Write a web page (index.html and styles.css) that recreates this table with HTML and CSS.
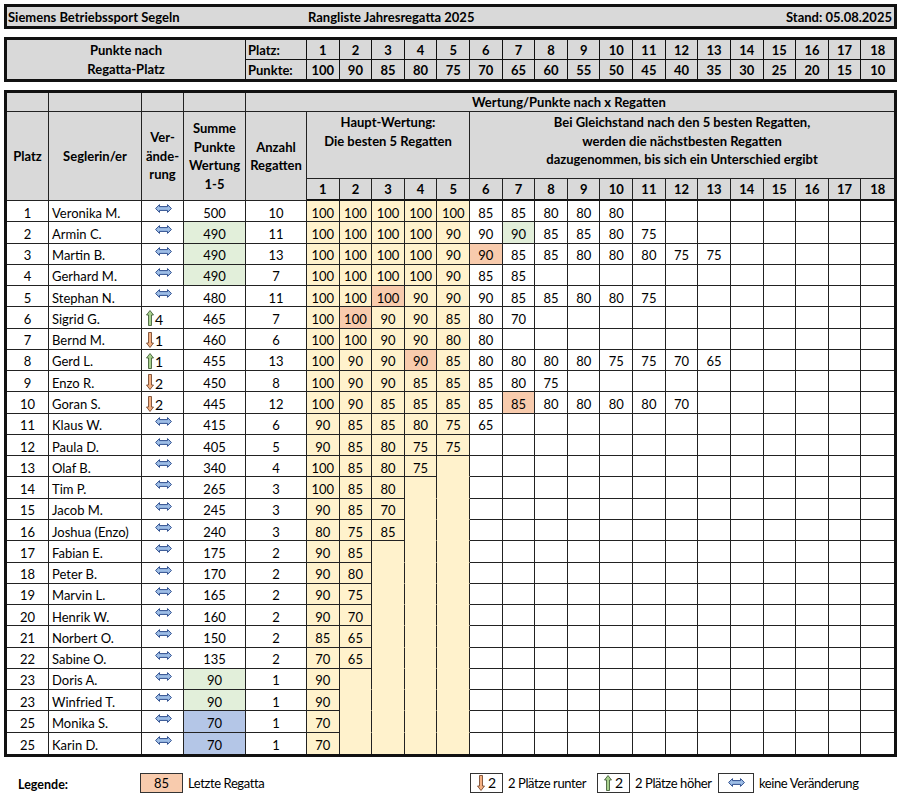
FILE: index.html
```html
<!DOCTYPE html>
<html lang="de">
<head>
<meta charset="utf-8">
<title>Rangliste Jahresregatta 2025</title>
<link rel="stylesheet" href="styles.css">
</head>
<body>
<div class="page">
  <div class="title">
    <span class="t-left">Siemens Betriebssport Segeln</span>
    <span class="t-mid">Rangliste Jahresregatta 2025</span>
    <span class="t-right">Stand: 05.08.2025</span>
  </div>

  <div class="points">
    <div class="pc p-label">Punkte nach<br>Regatta-Platz</div>
    <div class="pc p-key">Platz:</div>
    <div class="pc">1</div><div class="pc">2</div><div class="pc">3</div><div class="pc">4</div><div class="pc">5</div><div class="pc">6</div><div class="pc">7</div><div class="pc">8</div><div class="pc">9</div><div class="pc">10</div><div class="pc">11</div><div class="pc">12</div><div class="pc">13</div><div class="pc">14</div><div class="pc">15</div><div class="pc">16</div><div class="pc">17</div><div class="pc last">18</div>
    <div class="pc p-key bot">Punkte:</div>
    <div class="pc bot">100</div><div class="pc bot">90</div><div class="pc bot">85</div><div class="pc bot">80</div><div class="pc bot">75</div><div class="pc bot">70</div><div class="pc bot">65</div><div class="pc bot">60</div><div class="pc bot">55</div><div class="pc bot">50</div><div class="pc bot">45</div><div class="pc bot">40</div><div class="pc bot">35</div><div class="pc bot">30</div><div class="pc bot">25</div><div class="pc bot">20</div><div class="pc bot">15</div><div class="pc bot last">10</div>
  </div>

  <div class="main" id="main">
    <div class="c h"></div>
    <div class="c h"></div>
    <div class="c h"></div>
    <div class="c h"></div>
    <div class="c h h-wert last">Wertung/Punkte nach x Regatten</div>

    <div class="c h rs2 hc">Platz</div>
    <div class="c h rs2 hc">Seglerin/er</div>
    <div class="c h rs2 hc">Ver-<br>ände-<br>rung</div>
    <div class="c h rs2 hc">Summe<br>Punkte<br>Wertung<br>1-5</div>
    <div class="c h rs2 hc">Anzahl<br>Regatten</div>
    <div class="c h cs5 htop">Haupt-Wertung:<br>Die besten 5 Regatten</div>
    <div class="c h cs13 htop last">Bei Gleichstand nach den 5 besten Regatten,<br>werden die nächstbesten Regatten<br>dazugenommen, bis sich ein Unterschied ergibt</div>

    <div class="c h num">1</div><div class="c h num">2</div><div class="c h num">3</div><div class="c h num">4</div><div class="c h num">5</div><div class="c h num">6</div><div class="c h num">7</div><div class="c h num">8</div><div class="c h num">9</div><div class="c h num">10</div><div class="c h num">11</div><div class="c h num">12</div><div class="c h num">13</div><div class="c h num">14</div><div class="c h num">15</div><div class="c h num">16</div><div class="c h num">17</div><div class="c h num last">18</div>
  </div>

  <div class="legend">
    <span class="lg-label">Legende:</span>
    <span class="lg-box lg-salmon">85</span>
    <span class="lg-text lg-t1">Letzte Regatta</span>
    <span class="lg-box lg-arrow"><svg width="8" height="16" viewBox="0 0 8 16"><path d="M2.5 0.5 H5.5 V11 H7.5 L4 15.5 L0.5 11 H2.5 Z" fill="#f4b183" stroke="#6b3a20" stroke-width="0.8"/></svg><span>2</span></span>
    <span class="lg-text lg-t2">2 Plätze runter</span>
    <span class="lg-box lg-arrow"><svg width="8" height="16" viewBox="0 0 8 16"><path d="M4 0.5 L7.5 5 H5.5 V15.5 H2.5 V5 H0.5 Z" fill="#a9d18e" stroke="#34502a" stroke-width="0.8"/></svg><span>2</span></span>
    <span class="lg-text lg-t3">2 Plätze höher</span>
    <span class="lg-box lg-eq"><svg width="17" height="9" viewBox="0 0 17 9"><path d="M0.6 4.5 L4.5 0.6 V2.6 H12.5 V0.6 L16.4 4.5 L12.5 8.4 V6.4 H4.5 V8.4 Z" fill="#9dbde6" stroke="#2f4f8f" stroke-width="1"/></svg></span>
    <span class="lg-text">keine Veränderung</span>
  </div>
</div>
<script src="app.js"></script>
</body>
</html>
```

FILE: styles.css
```css
* { box-sizing: border-box; }
body {
  margin: 0;
  background: #fff;
  color: #000;
  font-family: Lato, "Liberation Sans", sans-serif;
  font-size: 13px;
}
.page {
  padding: 4px 0 0 4px;
  width: 897px;
}
.title {
  width: 893px;
  height: 25px;
  border: 3px solid #111;
  background: #d9d9d9;
  display: grid;
  grid-template-columns: 300px 1fr auto;
  align-items: center;
  font-weight: 700;
}
.t-left { padding-left: 1px; }
.t-mid { padding-left: 1px; }
.t-right { padding-right: 2px; }

.points {
  margin-top: 8px;
  width: 893px;
  border: 3px solid #111;
  background: #d9d9d9;
  display: grid;
  grid-template-columns: 42px 93px 42px 62px 61px repeat(18, 1fr);
  grid-template-rows: 20px 19px;
  font-weight: 700;
}
.pc {
  border-right: 1px solid #111;
  border-bottom: 1px solid #111;
  display: flex;
  align-items: center;
  justify-content: center;
  padding-top: 1px;
}
.pc.bot { border-bottom: none; }
.pc.last { border-right: none; }
.p-label {
  grid-column: 1 / 5;
  grid-row: 1 / 3;
  border-bottom: none;
  text-align: center;
  line-height: 19px;
}
.p-key { justify-content: flex-start; padding-left: 2px; }

.main {
  margin-top: 8px;
  width: 893px;
  border: 3px solid #111;
  display: grid;
  grid-template-columns: 42px 93px 42px 62px 61px repeat(18, 1fr);
  grid-template-rows: 19px 67px 22px repeat(26, 21.27px);
}
.c {
  border-right: 1px solid #222;
  border-bottom: 1px solid #222;
  display: flex;
  align-items: center;
  justify-content: center;
  white-space: nowrap;
  overflow: hidden;
  padding-top: 3px;
}
.c.last { border-right: none; }
.c.lr { border-bottom: none; }
.h {
  background: #d9d9d9;
  font-weight: 700;
  line-height: 18.5px;
  text-align: center;
  padding-top: 0;
}
.h-wert {
  grid-column: 5 / -1;
  justify-content: flex-start;
  padding-left: 226px;
}
.rs2 { grid-row: span 2; }
.cs5 { grid-column: span 5; }
.cs13 { grid-column: span 13; }
.htop { align-items: flex-start; padding-top: 1px; }
.hc { padding-top: 0; }
.num { border-bottom: 2px solid #111; padding-top: 1px; }

.l { justify-content: flex-start; padding-left: 3px; }
.y { background: #fff2cc; }
.ye { background: #fff2cc; border-bottom-color: transparent; }
.s { background: #f8cbad; }
.g { background: #e2efda; }
.b { background: #b4c6e7; }

.chg { padding-top: 0; }
.chg.eq { align-items: flex-start; padding-top: 3px; }
.chg.eq svg { margin-left: 1px; }
.chg.ud { justify-content: flex-start; padding-left: 4px; padding-top: 2px; }
.chg.ud svg { margin-right: 1px; }
.chg.ud span { font-size: 14px; line-height: 14px; padding-top: 3px; }

.legend {
  margin-top: 16px;
  height: 20px;
  display: flex;
  align-items: center;
  padding-left: 14px;
}
.lg-label {
  width: 122px;
  font-weight: 700;
  font-size: 12.5px;
  padding-top: 4px;
}
.lg-box {
  height: 20px;
  border: 1px solid #333;
  display: flex;
  align-items: center;
  justify-content: center;
}
.lg-salmon { width: 43px; background: #f8cbad; font-size: 13px; }
.lg-arrow { width: 33px; gap: 3px; font-size: 14px; }
.lg-arrow svg { margin-top: 1px; }
.lg-eq { width: 36px; align-items: center; }
.lg-text {
  font-size: 13px;
  letter-spacing: -0.4px;
  padding-left: 5px;
}
.lg-t1 { width: 287px; }
.lg-t2 { width: 94px; }
.lg-t3 { width: 88px; }
```

FILE: app.js
```js
(function () {
  var EQ = '<svg width="17" height="9" viewBox="0 0 17 9"><path d="M0.6 4.5 L4.5 0.6 V2.6 H12.5 V0.6 L16.4 4.5 L12.5 8.4 V6.4 H4.5 V8.4 Z" fill="#9dbde6" stroke="#2f4f8f" stroke-width="1"/></svg>';
  var UP = '<svg width="8" height="16" viewBox="0 0 8 16"><path d="M4 0.5 L7.5 5 H5.5 V15.5 H2.5 V5 H0.5 Z" fill="#a9d18e" stroke="#34502a" stroke-width="0.8"/></svg>';
  var DN = '<svg width="8" height="16" viewBox="0 0 8 16"><path d="M2.5 0.5 H5.5 V11 H7.5 L4 15.5 L0.5 11 H2.5 Z" fill="#f4b183" stroke="#6b3a20" stroke-width="0.8"/></svg>';

  // [platz, name, change, sum, sumClass, anzahl, values, highlights {colIndex: class}]
  var rows = [
    ["1", "Veronika M.", "e", "500", "", "10", [100,100,100,100,100,85,85,80,80,80], {}],
    ["2", "Armin C.", "e", "490", "g", "11", [100,100,100,100,90,90,90,85,85,80,75], {6: "g"}],
    ["3", "Martin B.", "e", "490", "g", "13", [100,100,100,100,90,90,85,85,80,80,80,75,75], {5: "s"}],
    ["4", "Gerhard M.", "e", "490", "g", "7", [100,100,100,100,90,85,85], {}],
    ["5", "Stephan N.", "e", "480", "", "11", [100,100,100,90,90,90,85,85,80,80,75], {2: "s"}],
    ["6", "Sigrid G.", "u4", "465", "", "7", [100,100,90,90,85,80,70], {1: "s"}],
    ["7", "Bernd M.", "d1", "460", "", "6", [100,100,90,90,80,80], {}],
    ["8", "Gerd L.", "u1", "455", "", "13", [100,90,90,90,85,80,80,80,80,75,75,70,65], {3: "s"}],
    ["9", "Enzo R.", "d2", "450", "", "8", [100,90,90,85,85,85,80,75], {}],
    ["10", "Goran S.", "d2", "445", "", "12", [100,90,85,85,85,85,85,80,80,80,80,70], {6: "s"}],
    ["11", "Klaus W.", "e", "415", "", "6", [90,85,85,80,75,65], {}],
    ["12", "Paula D.", "e", "405", "", "5", [90,85,80,75,75], {}],
    ["13", "Olaf B.", "e", "340", "", "4", [100,85,80,75], {}],
    ["14", "Tim P.", "e", "265", "", "3", [100,85,80], {}],
    ["15", "Jacob M.", "e", "245", "", "3", [90,85,70], {}],
    ["16", "Joshua (Enzo)", "e", "240", "", "3", [80,75,85], {}],
    ["17", "Fabian E.", "e", "175", "", "2", [90,85], {}],
    ["18", "Peter B.", "e", "170", "", "2", [90,80], {}],
    ["19", "Marvin L.", "e", "165", "", "2", [90,75], {}],
    ["20", "Henrik W.", "e", "160", "", "2", [90,70], {}],
    ["21", "Norbert O.", "e", "150", "", "2", [85,65], {}],
    ["22", "Sabine O.", "e", "135", "", "2", [70,65], {}],
    ["23", "Doris A.", "e", "90", "g", "1", [90], {}],
    ["23", "Winfried T.", "e", "90", "g", "1", [90], {}],
    ["25", "Monika S.", "e", "70", "b", "1", [70], {}],
    ["25", "Karin D.", "e", "70", "b", "1", [70], {}]
  ];

  var html = "";
  rows.forEach(function (r, ri) {
    var lr = ri === rows.length - 1 ? " lr" : "";
    html += '<div class="c' + lr + '">' + r[0] + '</div>';
    html += '<div class="c l' + lr + '">' + r[1] + '</div>';
    var ch = r[2];
    if (ch === "e") {
      html += '<div class="c chg eq' + lr + '">' + EQ + '</div>';
    } else {
      var icon = ch.charAt(0) === "u" ? UP : DN;
      html += '<div class="c chg ud' + lr + '">' + icon + '<span>' + ch.slice(1) + '</span></div>';
    }
    html += '<div class="c' + (r[4] ? " " + r[4] : "") + lr + '">' + r[3] + '</div>';
    html += '<div class="c' + lr + '">' + r[5] + '</div>';
    for (var i = 0; i < 18; i++) {
      var v = r[6][i];
      var cls = "c";
      if (r[7][i]) {
        cls += " " + r[7][i];
      } else if (i < 5) {
        cls += v !== undefined ? " y" : " ye";
      }
      if (i === 17) cls += " last";
      cls += lr;
      html += '<div class="' + cls + '">' + (v !== undefined ? v : "") + '</div>';
    }
  });
  document.getElementById("main").insertAdjacentHTML("beforeend", html);
})();
```
